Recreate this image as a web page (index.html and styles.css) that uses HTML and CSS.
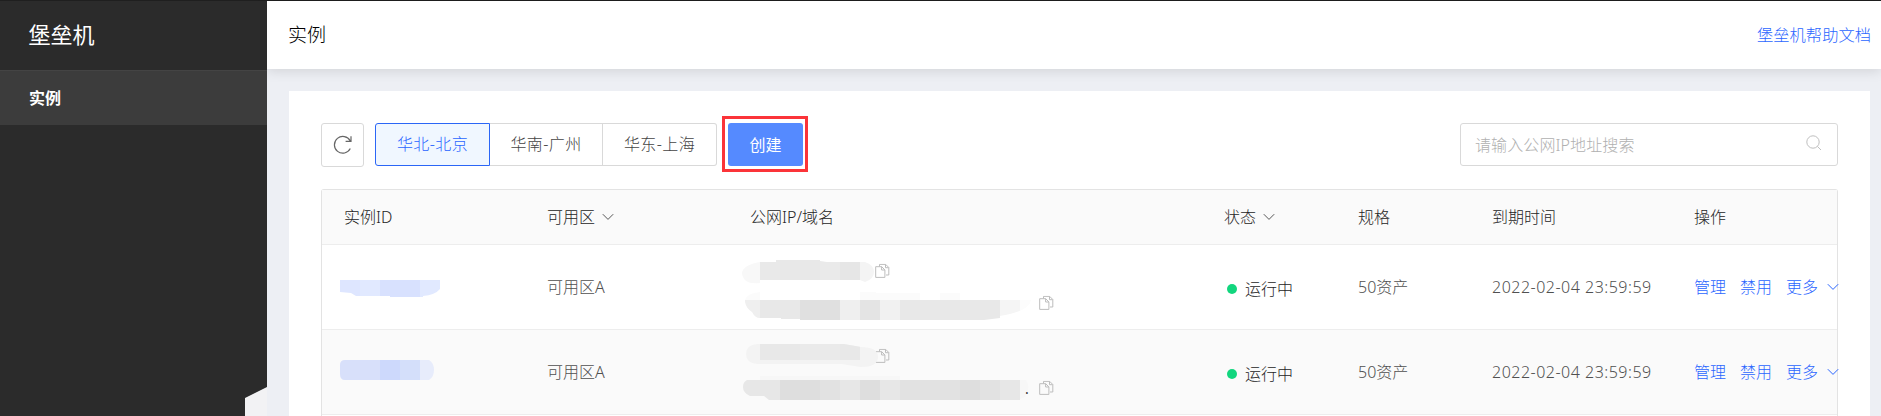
FILE: index.html
```html
<!DOCTYPE html>
<html lang="zh-CN">
<head>
<meta charset="utf-8">
<title>堡垒机</title>
<link rel="stylesheet" href="styles.css">
</head>
<body>
<svg class="defs" width="0" height="0" aria-hidden="true">
  <symbol id="copy" viewBox="0 0 15 15">
    <path d="M4.5 3V.9h6.2l3.1 3.1v7.5H11M10.5 1v3.2h3.2M.7 3.2h6l3.2 3.2v7.5H.7zM6.6 3.2v3.3h3.3" fill="none" stroke="#bdbdbd"/>
  </symbol>
  <symbol id="down" viewBox="0 0 12 8">
    <path d="M.8 1.2L6 6.4l5.2-5.2" fill="none" stroke="currentColor" stroke-width="1"/>
  </symbol>
</svg>
<div class="app">
  <aside class="sidebar">
    <div class="brand">堡垒机</div>
    <nav><a class="menu-item">实例</a></nav>
    <span class="corner"></span>
  </aside>
  <div class="main">
    <header class="topbar">
      <h1>实例</h1>
      <a class="help">堡垒机帮助文档</a>
    </header>
    <main class="card">
      <div class="toolbar">
        <button class="refresh" aria-label="refresh">
          <svg width="20" height="20" viewBox="0 0 20 20"><path d="M17.3 13.6A8.4 8.4 0 1 1 17.2 5.8M18 1.2V6.4H12.6" fill="none" stroke="#666" stroke-width="1.2"/></svg>
        </button>
        <div class="regions">
          <button class="region active">华北-北京</button>
          <button class="region">华南-广州</button>
          <button class="region">华东-上海</button>
        </div>
        <div class="highlight"><button class="create">创建</button></div>
        <div class="search">
          <span>请输入公网IP地址搜索</span>
          <svg width="16" height="16" viewBox="0 0 16 16"><circle cx="7" cy="7" r="6.2" fill="none" stroke="#bfbfbf"/><path d="M11.4 11.4l3.6 3.6" stroke="#bfbfbf"/></svg>
        </div>
      </div>
      <section class="table">
        <div class="row head">
          <div>实例ID</div>
          <div>可用区<svg class="arrow"><use href="#down"/></svg></div>
          <div>公网IP/域名</div>
          <div>状态<svg class="arrow"><use href="#down"/></svg></div>
          <div>规格</div>
          <div>到期时间</div>
          <div>操作</div>
        </div>
        <div class="row">
          <div>
            <svg class="mask-id" viewBox="0 0 104 84">
              <clipPath id="i1"><path d="M0 35h100v9q-5 6-17 7v1H50v-1H16l-5-3-11-1z"/></clipPath>
              <g clip-path="url(#i1)"><path fill="#dee6ff" d="M0 35h20v20H0z"/><path fill="#e1e9ff" d="M20 35h20v20H20zM80 35h20v20H80z"/><path fill="#d8e1fe" d="M40 35h40v20H40z"/></g>
            </svg>
          </div>
          <div>可用区A</div>
          <div>
            <svg class="mask-ip" viewBox="0 0 320 84">
              <clipPath id="a1"><path d="M2 28Q3 20 20 17h16v-2h44v1l7 1h38q9 3 9 10t-9 10l-5-2H20v3q-17 2-18-10"/></clipPath>
              <g clip-path="url(#a1)"><path fill="#f8f8f8" d="M0 10h20v30H0z"/><path fill="#e9e9e9" d="M20 10h20v30H20z"/><path fill="#e8e8e8" d="M40 10h40v30H40z"/><path fill="#eaeaea" d="M80 10h20v30H80z"/><path fill="#e6e6e6" d="M100 10h20v30h-20z"/><path fill="#f4f4f4" d="M120 10h20v30h-20z"/></g>
              <path fill="#fbfbfb" d="M5 55q2-7 15-8v8zM120 47h16v1h44v7h-60zM200 48h20v7h-20z"/>
              <clipPath id="a2"><path d="M5 55h286q-1 11-31 16v2l-16 2H60v-1H41v-1H20q-5 0-8-6-6-4-7-10"/></clipPath>
              <g clip-path="url(#a2)"><path fill="#efefef" d="M0 55h20v20H0zM100 55h20v20h-20z"/><path fill="#e8e8e8" d="M20 55h40v20H20zM160 55h100v20H160z"/><path fill="#e0e0e0" d="M60 55h40v20H60z"/><path fill="#e4e4e4" d="M120 55h20v20h-20z"/><path fill="#f1f1f1" d="M140 55h20v20h-20z"/><path fill="#f5f5f5" d="M260 55h20v20h-20z"/><path fill="#fcfcfc" d="M280 55h20v20h-20z"/></g>
              <use href="#copy" x="135" y="18.5" width="15" height="15"/><use href="#copy" x="299" y="50.5" width="15" height="15"/>
            </svg>
          </div>
          <div class="state"><i class="dot"></i>运行中</div>
          <div>50资产</div>
          <div class="time">2022-02-04 23:59:59</div>
          <div class="ops"><a>管理</a><a>禁用</a><a>更多<svg class="arrow"><use href="#down"/></svg></a></div>
        </div>
        <div class="row alt">
          <div>
            <svg class="mask-id" viewBox="0 0 104 84">
              <clipPath id="i2"><path d="M5 30h84q5 3 5 10t-5 10H5q-5 0-5-6v-9q0-5 5-5"/></clipPath>
              <g clip-path="url(#i2)"><path fill="#d8e0fa" d="M0 30h40v20H0z"/><path fill="#cdd9fc" d="M40 30h20v20H40z"/><path fill="#d4dffa" d="M60 30h20v20H60z"/><path fill="#e7ecfb" d="M80 30h20v20H80z"/></g>
            </svg>
          </div>
          <div>可用区A</div>
          <div>
            <svg class="mask-ip" viewBox="0 0 320 84">
              <use href="#copy" x="135" y="18.5" width="15" height="15"/><use href="#copy" x="299" y="50.5" width="15" height="15"/>
              <clipPath id="b1"><path d="M17 14h87l17 3q17 0 17 10t-17 10l-20-3H17Q6 33 6 24t11-10"/></clipPath>
              <g clip-path="url(#b1)"><path fill="#f3f3f3" d="M0 10h140v30H0z"/><path fill="#e8e8e8" d="M20 10h40v20H20zM100 10h20v20h-20z"/><path fill="#eaeaea" d="M60 10h40v20H60z"/></g>
              <path fill="#f7f7f7" d="M20 46h140v4H20zM280 50h6q5 8-1 17l-5 2z"/>
              <clipPath id="b2"><path d="M7 50h273v20H29l-5-4H10q-7-3-7-9 0-5 4-7"/></clipPath>
              <g clip-path="url(#b2)"><path fill="#e7e7e7" d="M0 50h280v20H0z"/><path fill="#dedede" d="M40 50h40v20H40zM120 50h20v20h-20zM220 50h20v20h-20z"/><path fill="#e2e2e2" d="M80 50h20v20H80zM160 50h60v20h-60zM240 50h20v20h-20z"/></g>
              <text x="285" y="64" class="ip-tail">.</text>
            </svg>
          </div>
          <div class="state"><i class="dot"></i>运行中</div>
          <div>50资产</div>
          <div class="time">2022-02-04 23:59:59</div>
          <div class="ops"><a>管理</a><a>禁用</a><a>更多<svg class="arrow"><use href="#down"/></svg></a></div>
        </div>
      </section>
    </main>
  </div>
</div>
</body>
</html>
```
FILE: styles.css
```css
* { box-sizing: border-box; }
body {
  margin: 0;
  height: 416px;
  overflow: hidden;
  font: 300 16px/24px "Noto Sans", "Noto Sans CJK SC", sans-serif;
  color: #252525;
  background: #edeff4;
}
.defs { position: absolute; }
button { font: inherit; padding: 0; margin: 0; }
.app { display: flex; height: 416px; border-top: 1px solid #1f1f1f; }
.sidebar { position: relative; width: 267px; flex: none; background: #2b2b2b; color: #fff; }
.brand { height: 70px; padding-left: 28.5px; border-bottom: 1px solid #444; font-size: 22px; line-height: 66px; font-weight: 400; }
.menu-item { display: block; height: 54px; padding-left: 29px; background: #3c3c3c; font-weight: 700; line-height: 54px; }
.corner { position: absolute; right: 0; bottom: 0; width: 22px; height: 29px; background: #f2f2f4; clip-path: polygon(0 11px, 100% 0, 100% 100%, 0 100%); }
.main { flex: 1; min-width: 0; }
.topbar { display: flex; justify-content: space-between; align-items: center; height: 68px; padding: 0 10px 0 21px; background: #fff; box-shadow: 0 2px 12px rgba(0, 0, 0, .12); }
h1 { margin: 0; font-size: 19px; font-weight: 300; color: #000; }
.help { color: #2b66ff; font-size: 16.3px; line-height: 24px; padding-bottom: 1px; }
.card { height: 325px; margin: 22px 11px 0 22px; padding: 32px 32px 0; background: #fff; }
.toolbar { display: flex; height: 44px; }
.refresh { display: flex; align-items: center; justify-content: center; width: 43px; height: 44px; background: #fff; border: 1px solid #d9d9d9; border-radius: 3px; }
.regions { display: flex; margin-left: 11px; height: 43px; }
.region { width: 113px; padding-bottom: 1px; background: #fff; border: 1px solid #d9d9d9; border-left: 0; color: #444; letter-spacing: .4px; }
.region.active { width: 115px; background: #f0f7ff; border: 1px solid #2b66f6; border-radius: 3px 0 0 3px; color: #2b66ff; }
.region:last-child { width: 114px; border-radius: 0 3px 3px 0; }
.highlight { width: 86px; height: 56px; margin: -7px 0 0 5px; padding: 4px 2px 3px 3px; border: 3px solid #fb3439; }
.create { display: block; width: 75px; height: 43px; background: #558aff; border: 0; border-radius: 3px; color: #fff; font-weight: 400; }
.search { display: flex; justify-content: space-between; align-items: center; width: 378px; height: 43px; margin-left: auto; padding: 1px 15px 0 14px; border: 1px solid #d9d9d9; border-radius: 3px; color: #b0b0b0; letter-spacing: .1px; }
.search svg { margin-top: -5px; }
.table { height: 227px; margin-top: 22px; border: 1px solid #e3e3e3; border-bottom: 0; border-radius: 3px 3px 0 0; }
.row { display: grid; grid-template-columns: 203px 203px 474px 134px 134px 202px 1fr; grid-template-rows: 84px; height: 85px; padding-left: 22px; border-bottom: 1px solid #ededed; color: #505050; }
.row > div { display: flex; align-items: center; white-space: nowrap; min-width: 0; }
.row.head { grid-template-rows: 54px; height: 55px; background: #fafafa; color: #252525; }
.row.alt { background: #fafafa; }
.arrow { width: 12px; height: 8px; flex: none; margin-left: 7px; }
.head .arrow { color: #555; }
.mask-id { width: 104px; height: 84px; margin-left: -4px; }
.mask-ip { width: 320px; height: 84px; margin-left: -10px; }
.ip-tail { font-size: 14px; font-weight: 400; fill: #333; }
.row .state { padding-top: 3px; color: #252525; }
.dot { width: 10px; height: 10px; margin: 0 8px 0 3px; border-radius: 50%; background: #12d67e; }
.time { letter-spacing: .5px; }
.ops { gap: 14px; padding-bottom: 1px; color: #2b66ff; }
.ops a { display: flex; align-items: center; }
.ops .arrow { margin-left: 9px; }
```
